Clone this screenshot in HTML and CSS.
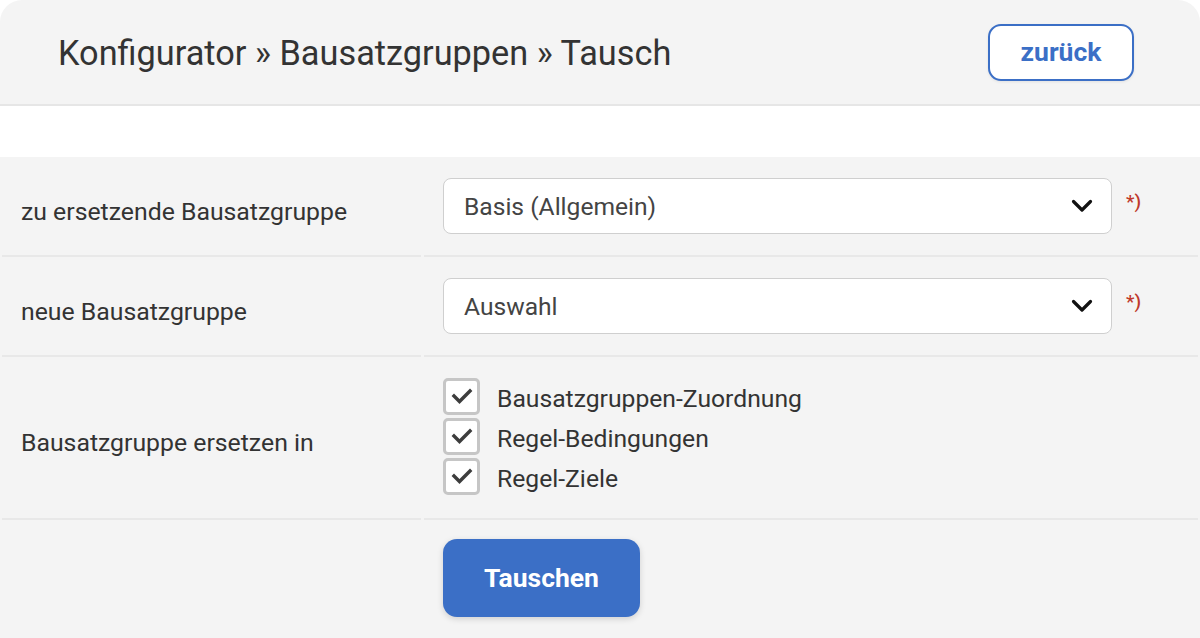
FILE: index.html
```html
<!DOCTYPE html>
<html lang="de">
<head>
<meta charset="utf-8">
<title>Konfigurator » Bausatzgruppen » Tausch</title>
<link rel="stylesheet" href="styles.css">
</head>
<body>
<div class="page">
  <header class="header">
    <h1 class="title">Konfigurator » Bausatzgruppen » Tausch</h1>
    <button class="btn-outline" type="button">zurück</button>
  </header>
  <div class="spacer"></div>
  <div class="form">
    <div class="cell label">zu ersetzende Bausatzgruppe</div>
    <div class="cell value">
      <div class="select">
        <span class="select-text">Basis (Allgemein)</span>
        <svg class="chevron" width="22" height="14" viewBox="0 0 22 14"><path d="M2.5 2.5 L11 11 L19.5 2.5" fill="none" stroke="#111" stroke-width="3.2" stroke-linecap="round" stroke-linejoin="round"/></svg>
      </div>
      <span class="req">*)</span>
    </div>

    <div class="cell label">neue Bausatzgruppe</div>
    <div class="cell value">
      <div class="select">
        <span class="select-text">Auswahl</span>
        <svg class="chevron" width="22" height="14" viewBox="0 0 22 14"><path d="M2.5 2.5 L11 11 L19.5 2.5" fill="none" stroke="#111" stroke-width="3.2" stroke-linecap="round" stroke-linejoin="round"/></svg>
      </div>
      <span class="req">*)</span>
    </div>

    <div class="cell label">Bausatzgruppe ersetzen in</div>
    <div class="cell value checks">
      <label class="check"><span class="box"><svg width="24" height="20" viewBox="0 0 24 20"><path d="M4 10 L9.5 15.5 L20 5" fill="none" stroke="#3d3d3d" stroke-width="3.4" stroke-linecap="square"/></svg></span><span class="check-text">Bausatzgruppen-Zuordnung</span></label>
      <label class="check"><span class="box"><svg width="24" height="20" viewBox="0 0 24 20"><path d="M4 10 L9.5 15.5 L20 5" fill="none" stroke="#3d3d3d" stroke-width="3.4" stroke-linecap="square"/></svg></span><span class="check-text">Regel-Bedingungen</span></label>
      <label class="check"><span class="box"><svg width="24" height="20" viewBox="0 0 24 20"><path d="M4 10 L9.5 15.5 L20 5" fill="none" stroke="#3d3d3d" stroke-width="3.4" stroke-linecap="square"/></svg></span><span class="check-text">Regel-Ziele</span></label>
    </div>

    <div class="cell last"></div>
    <div class="cell last value-btn">
      <button class="btn-primary" type="button">Tauschen</button>
    </div>
  </div>
</div>
</body>
</html>
```

FILE: styles.css
```css
html, body {
  margin: 0;
  padding: 0;
  background: #ffffff;
  font-family: Roboto, "Liberation Sans", Arial, sans-serif;
  color: #333333;
}

.page {
  width: 1200px;
  height: 638px;
  overflow: hidden;
  background: #ffffff;
}

.header {
  height: 104px;
  background: #f4f4f4;
  border-radius: 22px 22px 0 0;
  border-bottom: 2px solid #e6e6e6;
  display: flex;
  align-items: center;
  justify-content: space-between;
  padding: 0 66px 0 58px;
}

.title {
  margin: 0;
  font-size: 34.3px;
  font-weight: 400;
  color: #333333;
  letter-spacing: 0;
  padding-top: 2px;
}

.btn-outline {
  width: 146px;
  height: 57px;
  background: #ffffff;
  border: 2.5px solid #3b6fc6;
  border-radius: 13px;
  color: #3b6fc6;
  font-family: Roboto, "Liberation Sans", Arial, sans-serif;
  font-size: 26.5px;
  font-weight: 700;
  padding: 0 0 2px 0;
  box-shadow: 0 1px 3px rgba(0,0,0,0.08);
}

.spacer {
  height: 51px;
  background: #ffffff;
}

.form {
  background: #f4f4f4;
  display: grid;
  grid-template-columns: 419px 1fr;
  column-gap: 3px;
  padding: 0 2px;
  height: 481px;
  grid-template-rows: 100px 100px 163px 1fr;
}

.cell {
  border-bottom: 2px solid #e8e8e8;
  box-sizing: border-box;
}

.cell.last {
  border-bottom: none;
}

.label {
  display: flex;
  align-items: center;
  padding-left: 19px;
  font-size: 24.8px;
  color: #333333;
  padding-top: 10px;
}

.value {
  display: flex;
  align-items: center;
  padding-left: 19px;
}

.select {
  width: 669px;
  height: 56px;
  box-sizing: border-box;
  background: #ffffff;
  border: 1.5px solid #cfcfcf;
  border-radius: 8px;
  display: flex;
  align-items: center;
  justify-content: space-between;
  padding: 0 18px 0 20px;
}

.select-text {
  font-size: 24.6px;
  color: #444444;
}

.chevron {
  display: block;
}

.req {
  margin-left: 14px;
  align-self: flex-start;
  margin-top: 33px;
  color: #c0392b;
  font-size: 19px;
  font-weight: 500;
}

.checks {
  flex-direction: column;
  align-items: flex-start;
  justify-content: center;
  gap: 3px;
  padding-bottom: 3px;
}

.check {
  display: flex;
  align-items: center;
  height: 37px;
}

.box {
  width: 37px;
  height: 37px;
  box-sizing: border-box;
  border: 3px solid #c6c6c6;
  border-radius: 5px;
  background: #ffffff;
  display: flex;
  align-items: center;
  justify-content: center;
}

.box svg {
  display: block;
}

.check-text {
  margin-left: 17px;
  font-size: 24.7px;
  color: #333333;
  padding-top: 4px;
}

.value-btn {
  padding: 19px 0 0 19px;
}

.btn-primary {
  width: 197px;
  height: 78px;
  background: #3b6fc6;
  border: none;
  border-radius: 14px;
  color: #ffffff;
  font-family: Roboto, "Liberation Sans", Arial, sans-serif;
  font-size: 26.5px;
  font-weight: 700;
  padding: 0 0 2px 0;
  box-shadow: 0 2px 6px rgba(0,0,0,0.15);
}
```
